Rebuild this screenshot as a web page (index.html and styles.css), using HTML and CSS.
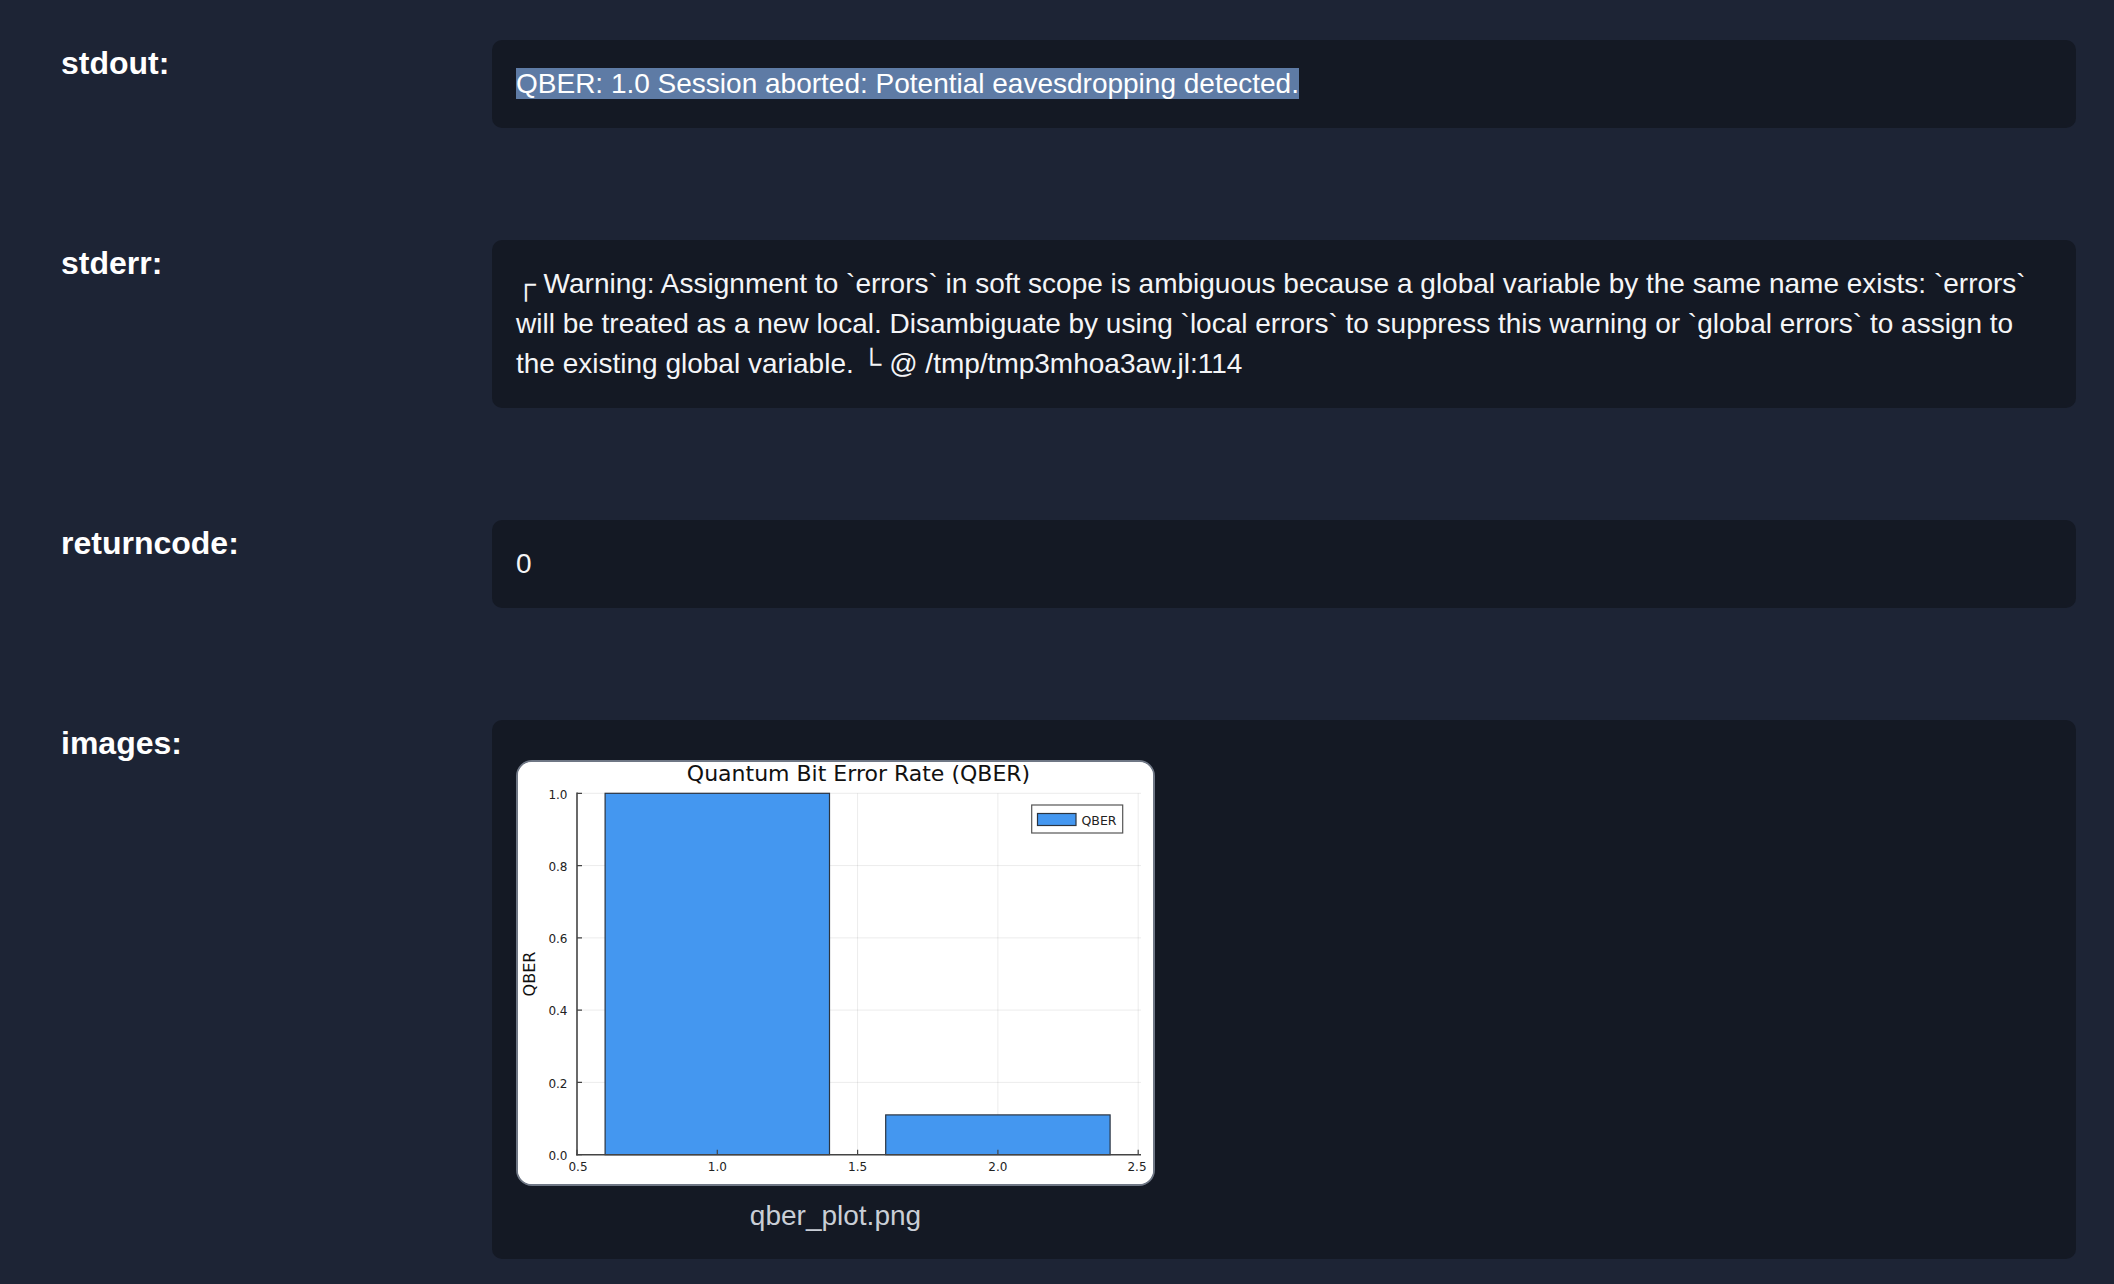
FILE: index.html
```html
<!DOCTYPE html>
<html lang="en">
<head>
<meta charset="utf-8">
<title>Run result</title>
<link rel="stylesheet" href="styles.css">
</head>
<body>
<main class="result">
  <div class="label">stdout:</div>
  <div class="box"><span class="selected">QBER: 1.0 Session aborted: Potential eavesdropping detected.</span></div>

  <div class="label">stderr:</div>
  <div class="box">┌ Warning: Assignment to `errors` in soft scope is ambiguous because a global variable by the same name exists: `errors` will be treated as a new local. Disambiguate by using `local errors` to suppress this warning or `global errors` to assign to the existing global variable. └ @ /tmp/tmp3mhoa3aw.jl:114</div>

  <div class="label">returncode:</div>
  <div class="box">0</div>

  <div class="label">images:</div>
  <div class="box box-images">
    <figure class="figure">
      <div class="plot">
        <svg class="plot-svg" viewBox="2 2 635 422" width="635" height="422" xmlns="http://www.w3.org/2000/svg">
          <rect x="0" y="0" width="639" height="426" fill="#ffffff"/>
          <!-- grid -->
          <g stroke="#000" stroke-opacity="0.08" stroke-width="1">
            <line x1="61" y1="33.3" x2="625" y2="33.3"/>
            <line x1="61" y1="105.6" x2="625" y2="105.6"/>
            <line x1="61" y1="177.9" x2="625" y2="177.9"/>
            <line x1="61" y1="250.1" x2="625" y2="250.1"/>
            <line x1="61" y1="322.4" x2="625" y2="322.4"/>
            <line x1="201.3" y1="33.3" x2="201.3" y2="394.7"/>
            <line x1="341.6" y1="33.3" x2="341.6" y2="394.7"/>
            <line x1="481.9" y1="33.3" x2="481.9" y2="394.7"/>
            <line x1="622.2" y1="33.3" x2="622.2" y2="394.7"/>
          </g>
          <!-- bars -->
          <rect x="89.1" y="33.3" width="224.4" height="361.4" fill="#4497f0" stroke="#2b3440" stroke-width="1.2"/>
          <rect x="369.7" y="354.9" width="224.4" height="39.8" fill="#4497f0" stroke="#2b3440" stroke-width="1.2"/>
          <!-- axes -->
          <g stroke="#444" stroke-width="1.6" fill="none">
            <line x1="61" y1="32.5" x2="61" y2="395.5"/>
            <line x1="60.2" y1="394.7" x2="625" y2="394.7"/>
          </g>
          <g stroke="#444" stroke-width="1.2">
            <line x1="61" y1="33.3" x2="66" y2="33.3"/>
            <line x1="61" y1="105.6" x2="66" y2="105.6"/>
            <line x1="61" y1="177.9" x2="66" y2="177.9"/>
            <line x1="61" y1="250.1" x2="66" y2="250.1"/>
            <line x1="61" y1="322.4" x2="66" y2="322.4"/>
            <line x1="61" y1="394.7" x2="66" y2="394.7"/>
            <line x1="61" y1="394.7" x2="61" y2="389.7"/>
            <line x1="201.3" y1="394.7" x2="201.3" y2="389.7"/>
            <line x1="341.6" y1="394.7" x2="341.6" y2="389.7"/>
            <line x1="481.9" y1="394.7" x2="481.9" y2="389.7"/>
            <line x1="622.2" y1="394.7" x2="622.2" y2="389.7"/>
          </g>
          <!-- tick labels -->
          <g class="tick" text-anchor="end">
            <text x="51.5" y="38.5">1.0</text>
            <text x="51.5" y="110.8">0.8</text>
            <text x="51.5" y="183.1">0.6</text>
            <text x="51.5" y="255.3">0.4</text>
            <text x="51.5" y="327.6">0.2</text>
            <text x="51.5" y="399.9">0.0</text>
          </g>
          <g class="tick" text-anchor="middle">
            <text x="62" y="410.7">0.5</text>
            <text x="201.3" y="410.7">1.0</text>
            <text x="341.6" y="410.7">1.5</text>
            <text x="481.9" y="410.7">2.0</text>
            <text x="621" y="410.7">2.5</text>
          </g>
          <text class="plot-title" x="342.5" y="20.7" text-anchor="middle">Quantum Bit Error Rate (QBER)</text>
          <text class="axis-label" x="0" y="0" text-anchor="middle" transform="translate(18.5 214) rotate(-90)">QBER</text>
          <!-- legend -->
          <rect x="515.7" y="45" width="91" height="28" fill="#fff" stroke="#555" stroke-width="1.2"/>
          <rect x="521.5" y="53.5" width="38.5" height="12" fill="#4497f0" stroke="#2b3440" stroke-width="1.2"/>
          <text class="legend" x="565.5" y="64.8">QBER</text>
        </svg>
      </div>
      <figcaption class="caption">qber_plot.png</figcaption>
    </figure>
  </div>
</main>
</body>
</html>
```

FILE: styles.css
```css
html, body {
  margin: 0;
  padding: 0;
}

body {
  background: #1d2435;
  color: #f4f5f7;
  font-family: "Liberation Sans", Arial, sans-serif;
}

.result {
  display: grid;
  grid-template-columns: 431px 1fr;
  row-gap: 112px;
  padding: 40px 38px 20px 61px;
}

.label {
  font-weight: bold;
  font-size: 32px;
  line-height: 40px;
  margin-top: 3px;
  color: #ffffff;
}

.box {
  background: #141924;
  border-radius: 10px;
  padding: 24px;
  font-size: 28px;
  line-height: 40px;
  color: #f4f5f7;
  min-width: 0;
}

.selected {
  background: #5e7ba5;
  color: #ffffff;
}

.box-images {
  padding-bottom: 23px;
}

.figure {
  margin: 16px 0 0 0;
  display: inline-flex;
  flex-direction: column;
  align-items: center;
  gap: 10px;
}

.plot {
  width: 639px;
  height: 426px;
  box-sizing: border-box;
  border: 2px solid #6f7785;
  border-radius: 16px;
  overflow: hidden;
  background: #ffffff;
}

.plot-svg {
  display: block;
}

.plot-svg text {
  font-family: "DejaVu Sans", "Liberation Sans", sans-serif;
  fill: #111;
}

.plot-svg .tick {
  font-size: 12px;
}

.plot-svg .tick text {
  fill: #222;
}

.plot-svg .plot-title {
  font-size: 22px;
}

.plot-svg .axis-label {
  font-size: 16px;
}

.plot-svg .legend {
  font-size: 12.5px;
  fill: #222;
}

.caption {
  font-size: 28px;
  line-height: 40px;
  color: #c9ced6;
}
```
